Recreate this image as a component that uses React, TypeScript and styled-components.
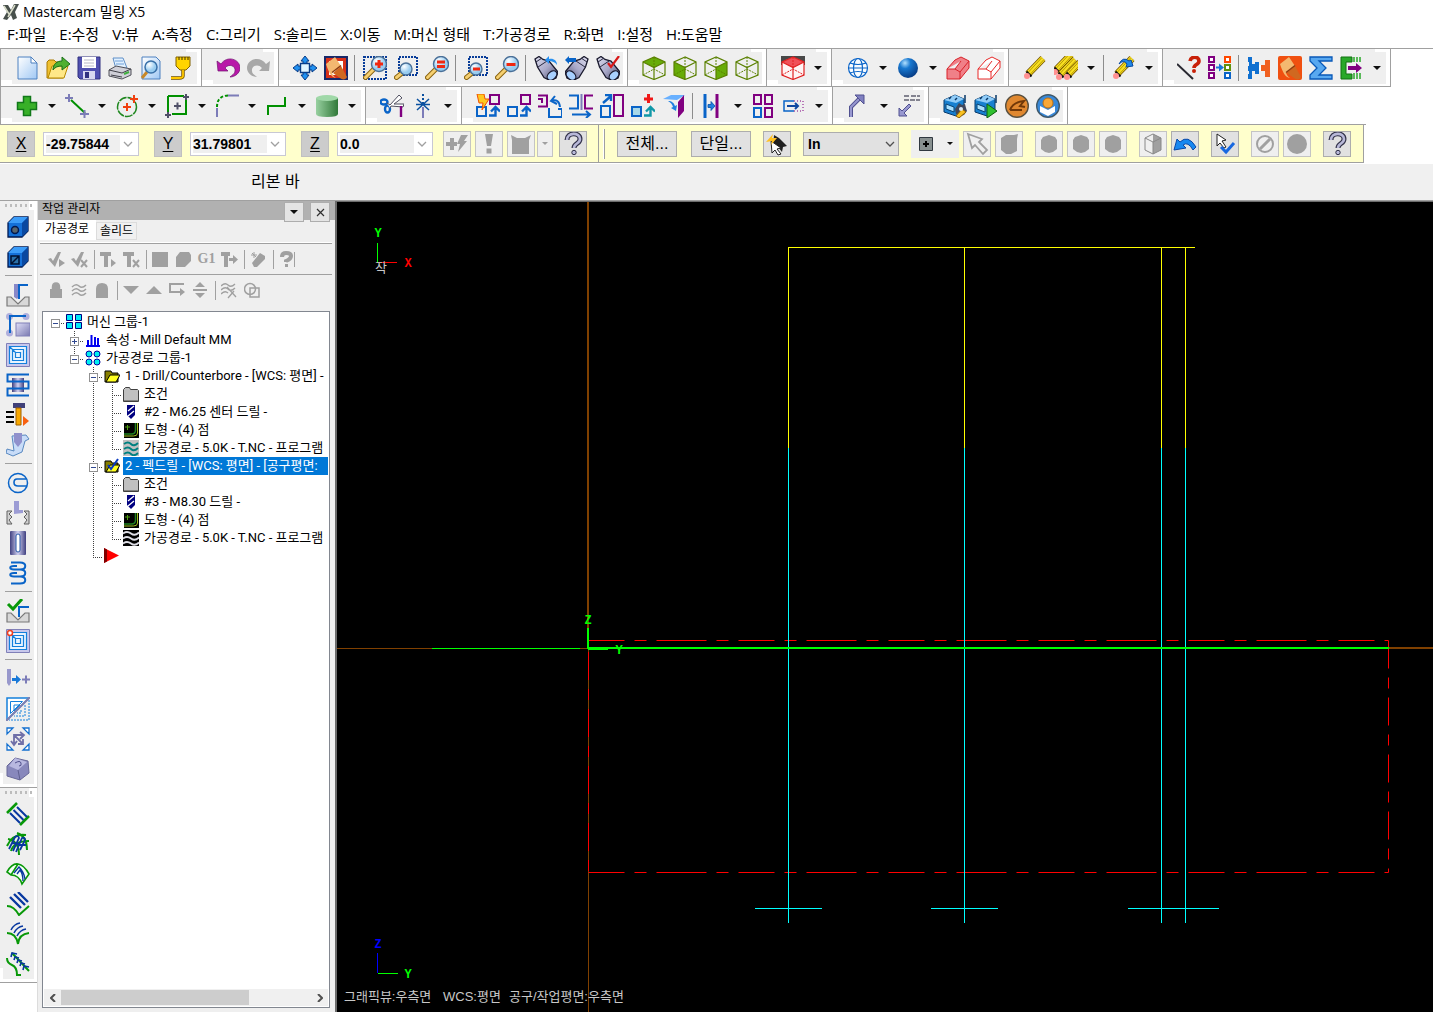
import React, { ReactNode } from 'react';
import styled, { createGlobalStyle, css } from 'styled-components';

const ui = `"Open Sans", "Noto Sans CJK KR", sans-serif`;
const treeFont = `Roboto, "Noto Sans CJK KR", sans-serif`;
const bitmap = `"Liberation Sans", "Noto Sans CJK KR", sans-serif`;

const GlobalStyle = createGlobalStyle`
  * { box-sizing: border-box; }
  body { margin: 0; background: #fff; color: #000; font: 13px/18px ${ui}; }
  button, input, select { font: inherit; color: inherit; margin: 0; }
  button { border: 0; padding: 0; background: none; }
  svg { display: block; flex: none; }
`;

/* ---------- shared drawing parts ---------- */

const OLIVE = '#5a8000';
const BLUE = '#0a64c8';
const PURPLE = '#800080';
const LAV = '#7c7cb8';
const GREY = '#a0a0a0';

const Stroke = ({ d, c = BLUE, w = 2, dash, fill = 'none' }: { d: string; c?: string; w?: number; dash?: string; fill?: string }) => (
  <path d={d} stroke={c} strokeWidth={w} strokeDasharray={dash} fill={fill} />
);

const Lens = ({ x = 15, y = 9, r = 8, sign }: { x?: number; y?: number; r?: number; sign?: string }) => (
  <>
    <path d={`M${x - r * 0.7} ${y + r * 0.7}L2.5 21.5`} stroke="#8a6410" strokeWidth="5" strokeLinecap="round" />
    <path d={`M${x - r * 0.7} ${y + r * 0.7}L2.5 21.5`} stroke="#f5cf70" strokeWidth="3" strokeLinecap="round" />
    <circle cx={x} cy={y} r={r} fill="url(#glass)" stroke="#4a7098" strokeWidth="1.4" />
    {sign && <path d={sign} stroke="#f02810" strokeWidth="3" fill="none" />}
  </>
);

const Binoculars = ({ flip }: { flip?: boolean }) => (
  <g transform={flip ? 'matrix(-1 0 0 1 24 0)' : undefined}>
    <path d="M1 3l4-2.500 4 3 6 1.500 9 11-2 6-6 2.500-6-3L3.500 11z" fill="url(#steel)" stroke="#18182c" strokeWidth="1.3" />
    <path d="M2 6l6-4M4 11l9-6" stroke="#282840" />
    <ellipse cx="18" cy="19.500" rx="5.500" ry="3.800" transform="rotate(-42 18 19.500)" fill="#a8d0ff" stroke="#18182c" strokeWidth="1.2" />
  </g>
);

const Cube = ({ face, c = OLIVE, fill = '#68ac08' }: { face?: string; c?: string; fill?: string }) => (
  <>
    {face && <path d={face} fill={fill} />}
    <path d="M12 1L1 6v13l11 4.500 11-4.500V6zM1 6l11 5.500L23 6M12 11.500v12" fill="none" stroke={c} strokeWidth="1.2" />
    <path d="M12 1v12M1 19l11-6 11 6" fill="none" stroke={c} strokeWidth="1" strokeDasharray="2 1" />
  </>
);

const Pencil = ({ x = 0, y = 0 }: { x?: number; y?: number }) => (
  <g transform={`translate(${x} ${y})`}>
    <path d="M5 18L20 2.500" stroke="#705000" strokeWidth="7" />
    <path d="M5 18L20 2.500" stroke="#f8e020" strokeWidth="5.400" />
    <path d="M5 16.500L18.500 2M7 18.500L21 3.500" stroke="#a88800" strokeWidth=".8" />
    <path d="M3.500 15.500l5 5" stroke="#101010" strokeWidth="2" />
    <circle cx="4" cy="20" r="3" fill="#ff9090" />
  </g>
);

const Brush = () => (
  <>
    <path d="M2 8l9-7 6 9-9 7c1 2 2 4 4 5-5-1-7-5-10-14z" fill="#f4b870" />
    <path d="M9 17l8-7 6 11c-1 3-5 3-7 1z" fill="#d06820" />
    <path d="M8 16.500l9-7" stroke="#8c3c10" strokeWidth="1.500" />
  </>
);

const Boxed = ({ x, y, s = 8, h = s, c = PURPLE, f = 'none' }: { x: number; y: number; s?: number; h?: number; c?: string; f?: string }) => (
  <rect x={x + 1} y={y + 1} width={s - 2} height={h - 2} fill={f} stroke={c} strokeWidth="2" />
);

const UpTurn = ({ c = BLUE }: { c?: string }) => <Stroke d="M13 21.500h6.500V14M15 17.500l4.500-4.500 4.500 4.500" c={c} w={2.4} />;

const QMark = () => (
  <>
    <path d="M6 8c0-8 13-8 13-1 0 5-6 4-6 9" fill="none" stroke="#303048" strokeWidth="5" />
    <path d="M6 8c0-8 13-8 13-1 0 5-6 4-6 9" fill="none" stroke="#b8b8d8" strokeWidth="2.600" />
    <circle cx="13" cy="20.500" r="2.200" fill="#b8b8d8" stroke="#303048" />
  </>
);

const Basin = () => <path d="M1 14h4l7 7 7-7h4v9H1z" fill="#d8d8d8" stroke="#787878" strokeWidth="1.200" />;
const Nested = () => (
  <>
    <path d="M0.500.500h23v23H.500z" fill="#c8c8ec" stroke="#8080b8" />
    <path d="M3 3h18v18H3z" fill="#e8f4ff" />
    <path d="M3.500 3.500h17v17h-17zM6.500 6.500h11v11h-11zM9.500 9.500h5v5h-5zM3.500 3.500l6 6" fill="none" stroke="#1480dc" strokeWidth="1.200" />
  </>
);
const Cutter = ({ hole }: { hole: ReactNode }) => (
  <>
    <path d="M2 8l6-6h14v14l-6 6H2z" fill="#1470d8" stroke="#001850" strokeWidth="1.300" />
    <path d="M2 8l6-6h14l-6 6z" fill="#3c9cf8" />
    <path d="M16 8l6-6v14l-6 6z" fill="#0a48a0" />
    {hole}
  </>
);
const Machine = () => (
  <>
    <path d="M1 6l11-5 9 4v13l-8 4-12-4z" fill="#1880d0" stroke="#083868" />
    <path d="M1 6l11-5 9 4-8 4z" fill="#90ccf8" />
    <path d="M3 10l8 3v5l-8-3z" fill="#a8e0ff" stroke="#084070" />
    <path d="M6 5l2-2M12 6l2-2M22 1v8" stroke="#083868" strokeWidth="1.500" />
  </>
);

const icons: Record<string, ReactNode> = {
  new: <><path d="M3 1h13l6 6v16H3z" fill="url(#page)" stroke="#4c80c0" /><path d="M16 1v6h6z" fill="#fff" stroke="#4c80c0" /></>,
  open: (
    <>
      <path d="M1 6l2-2h5l2 2h7v16H1z" fill="#f0c030" stroke="#a87800" />
      <path d="M2 22l4-12h16l-4 12z" fill="#ffe888" stroke="#b88a00" />
      <path d="M7 14c0-6 4-9 9-9V1l8 7-8 6v-4c-4 0-7 1-9 4z" fill="#50b030" stroke="#187018" />
    </>
  ),
  save: (
    <>
      <path d="M1 1h22v22H3l-2-2z" fill="#5050b0" stroke="#303080" />
      <path d="M5 1h14v11H5z" fill="#fff" />
      <path d="M7 4h10M7 7h10M7 10h10" stroke="#b8b8c8" />
      <path d="M6 15h12v8H6z" fill="#d8d8f0" />
      <path d="M8 16h4v6H8z" fill="#303080" />
    </>
  ),
  print: (
    <>
      <path d="M5 2h10l4 10-11 1z" fill="#e0f0ff" stroke="#6090c8" />
      <path d="M7 5h8M8 8h8" stroke="#70a0d8" />
      <path d="M1 14l7-4 15 3v6l-9 4-13-3z" fill="#d0d0d8" stroke="#505058" />
      <path d="M1 14l13 3 9-4M3 19l11 2" stroke="#404048" fill="none" />
      <path d="M16 18l5-2" stroke="#40b040" strokeWidth="2" />
    </>
  ),
  preview: (
    <>
      <path d="M3 1h14l4 4v18H3z" fill="url(#page)" stroke="#4c80c0" />
      <path d="M8 16l-5 6" stroke="#c88828" strokeWidth="3" />
      <circle cx="12" cy="11" r="6" fill="url(#glass)" stroke="#3870a8" strokeWidth="1.500" />
    </>
  ),
  cable: (
    <>
      <path d="M6 1h14v9l-4 4h-6l-4-4z" fill="#ffd400" stroke="#806000" />
      <path d="M9 1v3M12 1v3M15 1v3M18 1v3" stroke="#403000" />
      <path d="M13 14v6q0 2-4 2H1" fill="none" stroke="#705000" strokeWidth="3.400" />
      <path d="M13 14v6q0 2-4 2H1" fill="none" stroke="#ffc800" strokeWidth="1.800" />
    </>
  ),
  undo: <path d="M1 5l1 10h10l-3-3c4-5 11-2 10 3 0 3-3 4-5 6 5 0 10-4 10-9C24 3 11-1 5 8z" fill="#b818a8" stroke="#701070" strokeWidth=".700" />,
  redo: <path d="M23 5l-1 10H12l3-3c-4-5-11-2-10 3 0 3 3 4 5 6-5 0-10-4-10-9C0 3 13-1 19 8z" fill="#a8a8a8" />,
  fit: (
    <>
      <path d="M12 0l4 5h-2v4h-4V5H8zM12 24l-4-5h2v-4h4v4h2zM0 12l5-4v2h4v4H5v2zM24 12l-5 4v-2h-4v-4h4V8z" fill="#2090f0" stroke="#083c88" />
      <path d="M7.500 7.500h9v9h-9z" fill="#e0f4ff" stroke="#083c88" strokeWidth="1.400" />
    </>
  ),
  repaint: (
    <>
      <path d="M1 1h22v22H1z" fill="#d83018" stroke="#182868" strokeWidth="2" />
      <path d="M5 5h14v14H5z" fill="#fff" />
      <Brush />
    </>
  ),
  zoomWin: (<><path d="M1 1h22v22H1z" fill="none" stroke="#083c98" strokeWidth="2" strokeDasharray="2 1" /><Lens x={16} y={8} r={7.5} sign="M12 8h8M16 4v8" /></>),
  zoomTarget: (<><path d="M5 1h18v18H5z" fill="none" stroke="#083c98" strokeWidth="2" strokeDasharray="2 1" /><Lens x={12} y={13} r={6} /></>),
  zoomEq: <Lens x={16} y={8} r={7.5} sign="M12 6h8M12 10.500h8" />,
  unzoomWin: (<><path d="M5 1h18v18H5z" fill="none" stroke="#083c98" strokeWidth="2" strokeDasharray="2 1" /><Lens x={12} y={13} r={6} sign="M9 13h7" /></>),
  unzoom: <Lens x={16} y={8} r={7.5} sign="M11.500 8.500h9" />,
  viewNext: (<><Binoculars /><path d="M23 9c0-5-4-7-8-6V0l-4 4 4 4V5c3 0 6 1 8 4z" fill="#2890f0" /></>),
  viewPrev: (<><Binoculars flip /><path d="M0 4l4-4v2h7v4H4v2z" fill="#0864c8" /></>),
  viewSave: (<><Binoculars /><path d="M12 7l3 4 8-11" stroke="#d81818" strokeWidth="2.200" fill="none" /></>),
  cubeTop: <Cube face="M12 1L1 6l11 5.500L23 6z" />,
  cubeFront: <Cube face="M1 6l11 5.500v12L1 19z" />,
  cubeRight: <Cube face="M23 6l-11 5.500v12L23 19z" />,
  cubeIso: <Cube />,
  plane: (<><path d="M0 0h24v9H0z" fill="#484848" /><path d="M12 1L1 6v13l11 4.500L23 19V6z" fill="#fff4f4" /><Cube c="#e02020" fill="#f05058" face="M12 1L1 6l11 5.500L23 6z" /></>),
  wireSphere: (
    <g fill="none" stroke={BLUE} strokeWidth="1.200">
      <circle cx="12" cy="12" r="9.500" fill="#f8fcff" />
      <ellipse cx="12" cy="12" rx="4.500" ry="9.500" />
      <path d="M2.500 12h19M4 7q8 3 16 0M4 17q8-3 16 0" />
    </g>
  ),
  sphere: <circle cx="12" cy="12" r="10" fill="url(#ball)" />,
  solid: <path d="M1 13l8-9 6-3 8 4v7l-9 11H1zM1 13h8l6-8M9 13l5 3v7M14 16l9-11" fill="#f08088" stroke="#d82028" />,
  solidWire: <path d="M1 13l8-9 6-3 8 4v7l-9 11H1zM1 13h8l6-8M9 13l5 3v7M14 16l9-11" fill="#fff" stroke="#e82828" />,
  pencil: <Pencil />,
  pencils: (<><Pencil x={-3} y={-4} /><Pencil x={1} y={1} /><Pencil x={9} y={1} /></>),
  unerase: (<><Pencil /><path d="M7 8q5-5 8 0l-1 3 7-1-2-6-2 1Q11 0 7 8z" fill="#2088e8" stroke="#0848a0" /></>),
  lineInfo: (<><path d="M0 8l16 15" stroke="#282830" strokeWidth="2" /><path d="M13 5c1-5 9-5 9 0 0 4-5 3-5 7" stroke="#c82008" strokeWidth="3.600" fill="none" /><circle cx="17" cy="15" r="2" fill="#c82008" /></>),
  attrs: (
    <>
      <Boxed x={0} y={0} s={7} f="#fff" /><Boxed x={0} y={8} s={7} f="#fff" /><Boxed x={0} y={16} s={7} f="#fff" />
      <Boxed x={16} y={0} s={7} c="#ff4800" f="#fff" /><Boxed x={16} y={8} s={7} c="#60900c" f="#fff" /><Boxed x={16} y={16} s={7} c={BLUE} f="#fff" />
      <path d="M8 10.500h3v-3l5 4-5 4v-3H8z" fill="#1878d8" />
    </>
  ),
  fork: (
    <>
      <path d="M1 1h4v7h3V6h4v12H8v-3H5v8H1v-5h1v-3H1v-5h1V6H1z" fill="#1070d0" />
      <path d="M23 4v17h-5v-6h-6V9h6V4z" fill="#f06020" /><path d="M12 9h2v6h-2z" fill="#fff" />
    </>
  ),
  paint: (<><rect width="24" height="24" rx="2" fill="#f05010" /><Brush /></>),
  sigma: <path d="M1 1h22v4H10l7 7-7 7h13v4H1v-4l7-7-7-7z" fill="#58a8f0" stroke="#0858b8" strokeWidth="1.300" />,
  exit: (
    <>
      <path d="M12 1H1v22h11v-5H6V6h6z" fill="#28a828" stroke="#107010" />
      <path d="M14 1v5M17 1v5M20 1v5M14 17v6M17 17v6M20 17v6" stroke="#28a828" strokeWidth="1.500" />
      <path d="M8 10h8V7l6 5-6 5v-3H8z" fill={PURPLE} />
    </>
  ),
  plus: <path d="M8.500 2.500h7v6h6v7h-6v6h-7v-6h-6v-7h6z" fill="#38b028" stroke="#107818" strokeWidth="1.500" />,
  line: (<><Stroke c="#009000" d="M6 6l14 13" /><Stroke c={LAV} d="M0 4h8M4 0v8M15 20h9M19.500 16v8" /></>),
  circle: (<><circle cx="12" cy="13" r="9.500" fill="none" stroke="#208820" strokeWidth="1.500" strokeDasharray="8 1" /><Stroke c="#f04010" d="M8 13h8M12 9v8M15 5h8M19 1v8" /></>),
  rect: (<><Stroke c="#009000" d="M3 2h16M3 2v18M21 6v14H7" /><Stroke c="#505068" d="M9 12h7M12.500 8.500v7M18 3h6M21 0v6M0 21h6M3 18v6" /></>),
  fillet: (<><Stroke c="#009000" w={2} dash="3 2" d="M2 13Q2 2 13 1.500" /><Stroke c={LAV} d="M13 1.500h11M2 14v9" /></>),
  spline: <Stroke c="#009000" d="M3 21v-9h17V3" />,
  cylinder: (<><path d="M1 4v16q0 3 11 3t11-3V4z" fill="url(#cyl)" /><ellipse cx="12" cy="4" rx="11" ry="3" fill="#a0d8a8" /></>),
  scissors: (
    <>
      <ellipse cx="4" cy="8" rx="3.500" ry="2.500" fill="none" stroke={BLUE} strokeWidth="2.400" />
      <ellipse cx="7.500" cy="15" rx="2.500" ry="3.500" fill="none" stroke={BLUE} strokeWidth="2.400" />
      <path d="M7 9l3 2L19 1l3 3-8 6h10l-1 3-12-1-1 2" fill="#fff" stroke="#505060" />
      <path d="M21 12v11" stroke={PURPLE} strokeWidth="2.400" />
    </>
  ),
  breakIcon: (<><Stroke c="#0a50a0" d="M6 5l12 11M18 5L6 16M5 10.500h14" w={1.5} /><Stroke c="#0a50a0" dash="2 2" d="M12 0v12" /><Stroke c={LAV} d="M12 13v11" /></>),
  xDynamic: (<><Boxed x={13} y={0} s={11} /><Boxed x={0} y={12} s={11} c={BLUE} /><UpTurn /><path d="M1 0h7l1 5h4L6 16l1-7H3z" fill="#ffc820" stroke="#f05000" /></>),
  xTranslate: (<><Boxed x={13} y={0} s={11} /><Boxed x={0} y={12} s={11} c={BLUE} /><UpTurn /></>),
  xRotate: (<><Stroke c={PURPLE} d="M0 1.500h9v11H0M4 5v4M0 5h5" /><Stroke d="M12 15h-1v8h13v-8h-4M13 7q8-3 9 6M17 2l-4 5 6 3" /></>),
  xMirror: (<><Stroke d="M0 1.500h9v13H0M3 20.500h18M17 17l4 3.500-4 3.500" /><Stroke c={PURPLE} d="M24 1.500h-8v13h8" /><Stroke c={LAV} d="M12.500 0v16" /></>),
  xScale: (<><Boxed x={0} y={11} s={11} h={13} c={BLUE} /><Boxed x={13} y={0} s={11} h={23} /><Stroke d="M3 9l8-7M5 1h6v6" w={2.4} /></>),
  xOffset: (<><Boxed x={0} y={12} s={11} c={BLUE} f="#a8d8e8" /><UpTurn c="#1098a8" /><Stroke c="#f01818" d="M13 5h9M17.500 0v9" w={3} /></>),
  xProject: (<><path d="M1 5l8-4h14l-8 5z" fill="#68b0ff" /><path d="M16 8l6-7v16l-6 7z" fill={PURPLE} /><path d="M6 7c4 0 6 2 7 5l2-1-1 6-5-3 2-1q-1-4-5-6z" fill="#2080e0" /></>),
  xMove: (<><Stroke d="M4 0v24" w={3} /><Stroke c={PURPLE} d="M16 0v24" w={3} /><path d="M7 10.500h3v-3l4 4.500-4 4.500v-3H7z" fill="#2080e0" stroke="#0850a8" strokeWidth=".800" /></>),
  array: (<><Boxed x={2} y={0} s={9} h={11} /><Boxed x={13} y={0} s={9} h={11} /><Boxed x={2} y={13} s={9} h={11} c={BLUE} /><Boxed x={13} y={13} s={9} h={11} /></>),
  stretch: (<><path d="M12 7h9v10h-9" fill="none" stroke={PURPLE} strokeDasharray="1 2" /><Stroke w={1.5} d="M12 7H2v10h10" /><Stroke d="M5 12h11M13 9l3 3-3 3" w={2} c="#1048a0" /></>),
  leader: (<><path d="M4 23V13l9-9" fill="none" stroke="#505090" strokeWidth="4" /><path d="M4 23V13l9-9" fill="none" stroke="#9898d0" strokeWidth="2" /><path d="M8 1h9v9z" fill="#8080c0" stroke="#505090" /></>),
  note: (<><path d="M7 2h5M14 2h9M7 6h16" stroke="#606070" strokeDasharray="5 1" strokeWidth="1.500" /><path d="M2 22v-8l3 3 7-7 2 2-7 7 3 3z" fill="#9898d0" stroke="#505090" /></>),
  machineSet: (<><Machine /><path d="M16 9l3 2 3-1 1 4 1 3-3 4-4 1-4-2-1-5 2-3z" fill="#40485c" /><path d="M13 22l6-7 4 3-7 6z" fill="#f8c020" stroke="#906000" /><circle cx="18" cy="15" r="2" fill="#e0e8f0" /></>),
  machineRun: (<><Machine /><path d="M13 10l10 7-10 7z" fill="#30c030" stroke="#106010" /></>),
  chook: (<><circle cx="12" cy="12" r="11.300" fill="#e08830" stroke="#585040" strokeWidth="1.400" /><path d="M5 16q3-8 14-9l-4 5 5 1M5 16h12" stroke="#703808" strokeWidth="2" fill="none" /></>),
  person: (<><circle cx="12" cy="12" r="11.300" fill="#3888d8" stroke="#405868" strokeWidth="1.400" /><path d="M4 12l8 4 7-4v6l-7 4-8-4z" fill="#fff" /><circle cx="12" cy="9" r="5" fill="#f8a838" stroke="#c07010" /></>),

  /* left bars */
  boxRound: <Cutter hole={<circle cx="9" cy="15" r="3.500" fill="#58646c" stroke="#001850" strokeWidth="1.500" />} />,
  boxSquare: <Cutter hole={<path d="M5 11h8v8H5zM5 19l8-8" fill="#2a70a8" stroke="#001030" strokeWidth="1.500" />} />,
  contour: (<><Basin /><path d="M8 1h5v13l-2 2-3-2z" fill="#8888c8" /><Stroke d="M22 2h-9v14" /></>),
  pocket: (<><rect x="10" y="10" width="14" height="13" fill="url(#lav)" stroke="#8080b8" /><circle cx="3.500" cy="3.500" r="3.500" fill="#b0b0dc" /><circle cx="20" cy="3.500" r="3.500" fill="#b0b0dc" /><circle cx="3.500" cy="20" r="3.500" fill="#b0b0dc" /><Stroke d="M20 3H4v17" /></>),
  nested: <Nested />,
  slot: (<><path d="M6 5h12v14H6z" fill="url(#barGrad)" /><Stroke d="M23 1.500H1.500v7h21v7H1.500v7H23" /></>),
  tool: (<><path d="M7 0h12v5H7z" fill="#404078" /><path d="M10 5h5v17h-5z" fill="#f8a800" stroke="#a06000" /><path d="M0 9h8M0 14h8M0 19h8" stroke="#000" strokeWidth="2" /><path d="M17 13l6 5-6 5z" fill="#f86010" /></>),
  scroll: (<><path d="M6 3l14-1 3 4-4 2-3 11-9 4-7-3 1-4 7 2z" fill="#c8dcf8" stroke="#5888c0" /><path d="M8 0h8v9l-4 5-4-5z" fill="#9090cc" /></>),
  circ: (<><circle cx="12" cy="12" r="9.500" fill="none" stroke={BLUE} strokeWidth="1.500" /><Stroke d="M11 8h9M12 15h9M11 8q-3 0-3 3.500t4 3.500" w={1.6} /></>),
  thread: (<><path d="M8 0h5v9h4v3l-9 1z" fill="#9c9cd4" /><path d="M1 10h5l-3 3 3 3-3 3 3 4H1zM23 10h-5l3 3-3 3 3 3-3 4h5z" fill="#d0d0d0" stroke="#606060" /></>),
  bar: (<><rect x="4" width="16" height="24" rx="1" fill="url(#barGrad)" /><rect x="10" y="3" width="4" height="18" rx="2" fill="#fff" stroke="#2858a8" /></>),
  helix: <Stroke w={2} d="M5 1.500h9c7 0 7 7 0 7H8c-5 0-5-3.500 0-3.500h3M14 8.500c7 0 7 7 0 7H8c-5 0-5-3.500 0-3.500h3M14 15.500c7 0 7 7 0 7H5" />,
  check: (<><Basin /><Stroke d="M23 8H13v10" /><Stroke c="#089808" w={3} d="M2 5l5 5L16 0" /></>),
  nestedDot: (<><Nested /><circle cx="4" cy="4" r="2.500" fill="#fff" stroke="#f04020" strokeWidth="1.500" /></>),
  step: (<><path d="M1 2h4v14l-2 3-2-3z" fill="#9898cc" /><path d="M6 11h4V8l5 4.500-5 4.500v-3H6z" fill="#1878d8" /><Stroke c={LAV} d="M16 12.500h8M20 8.500v8" /></>),
  trimPath: (<><path d="M1 1h22L1 23z" fill="#fff" stroke="#1480dc" strokeWidth="1.500" /><path d="M4.500 4.500h12l-12 12zM8 8h6l-6 6z" fill="none" stroke="#1480dc" /><path d="M23 3v20H3M19 8v11H8M15 13v3h-4" fill="none" stroke="#1480dc" strokeDasharray="2 1" /><Stroke c="#8080b0" d="M0 24L24 0" /></>),
  transform: (<><path d="M1 1h6L1 7zM23 1h-6l6 6zM1 23h6l-6-6zM23 23h-6l6-6z" fill="#fff" stroke="#1470d0" strokeWidth="1.300" /><path d="M8 17V8h9M5 14l3 4 3-4M14 5l4 3-4 4M8 8l9 9M17 12v5h-5" fill="none" stroke="#7070a8" strokeWidth="1.800" /></>),
  key: (<><path d="M1 9L9 1l13 3 1 12-9 7-13-4z" fill="#8888bc" stroke="#686898" /><path d="M9 1L3 9l9 4 9-8z" fill="#b8b8e0" /><path d="M12 13l2 10" stroke="#606090" /><path d="M9 6q5-3 6 0t-2 3" stroke="#50508c" fill="none" /></>),
  surf1: (<><Stroke c="#089808" w={2.6} d="M1 11L11 1M14 23l9-9" /><Stroke c="#0838a0" d="M4 11l10 10M7.500 8l10 10M11 5l10 10" w={2} /></>),
  surf2: (<><path d="M1 14Q7 1 20 3M5 19Q8 9 23 9M2 7q11 2 11 16M11 1q10 3 10 17" stroke="#089808" strokeWidth="2" fill="none" /><path d="M3 17L9 5q3-2 4 1l-6 13M10 20l6-14q3-1 3 2l-5 10M6 11l14 2" stroke="#0838a0" strokeWidth="1.800" fill="none" /></>),
  surf3: (<><path d="M1 10Q6 1 12 2q6 1 11 10l-7 10Q13 13 5 13zM5 13l7-11" stroke="#089808" strokeWidth="1.600" fill="#f4fff4" /><path d="M8 11l5-6q5 5 6 12M11 12l3-4q3 4 3 11" stroke="#0838a0" strokeWidth="1.400" fill="none" /></>),
  surf4: (<><Stroke c="#089808" w={2} d="M1 14q7 0 12 9l10-9" /><Stroke c="#0838a0" w={2.4} d="M4 5l11 11M8 2l11 11M12 0l10 10" /></>),
  surf5: (<><Stroke c="#089808" w={2} d="M1 11q9 0 11 11 1-10 11-11" /><Stroke c="#0838a0" w={1.5} d="M5 8q3-6 9-7M8 11q3-6 9-7M11 14q3-6 9-7" /></>),
  surf6: (<><Stroke c="#089808" w={2} d="M6 1l17 18M1 6q0 5 5 7t5 10h4" /><Stroke c="#0838a0" w={1.6} d="M5 5l1-4 5 1M8 8l1-3 4 1M11 11l1-3 4 1M14 14l1-3 4 1M17 18l1-4 5 1" /></>),

  /* selection bar */
  q: <QMark />,
  flash: <path d="M1 10h4V6h4v4h3v4H9v4H5v-4H1zM16 3h7l-4 6h3l-9 11 2-8h-3z" fill={GREY} />,
  bang: <path d="M8 2h8l-2 12h-4zM9.500 16.500h5v5h-5z" fill={GREY} />,
  region: <path d="M2 3l6 3h8l6-3-2 5v14H3V8z" fill={GREY} />,
  pick: (<><path d="M9 3l5 3 8 8-4 1-1 5-4-5-5 1z" fill="#202020" /><path d="M6 9l10 7-4 1 4 5-3 1-3-5-3 3z" fill="#fff" stroke="#202020" /><path d="M1 10l7-8-1 4h5l-6 7 1-4z" fill="#ffc020" /></>),
  arrow: <path d="M3 2l14 5-3 3 8 8-4 4-8-9-3 3z" fill="#f0f0f0" stroke={GREY} strokeWidth="1.800" />,
  blob: <path d="M4 6l5-3h8l4-1-1 5v12l-6 3H9l-5-4z" fill={GREY} />,
  hex: <path d="M12 3l6 2 2 3v9l-4 3-4 1-4-1-4-3V8l2-3z" fill={GREY} />,
  cubeGrey: (<><path d="M12 2l8 4v12l-8 4z" fill={GREY} /><path d="M12 2L4 6v12l8 4 8-4V6zM4 6l8 4 8-4M12 10v12" stroke="#888" fill="none" /></>),
  back: <path d="M1 18L4 7l3 3Q15 2 23 15l-3 3Q15 9 10 13l3 3z" fill="#1888f0" stroke="#0848a8" />,
  verify: (<><path d="M4 2l9 6-4 1 4 6-2 1-4-5-3 3z" fill="#fff" stroke="#202020" /><path d="M8 15l5 5 8-9" stroke="#1868e0" strokeWidth="3" fill="none" /></>),
  forbid: (<><circle cx="12" cy="12" r="8" fill="none" stroke={GREY} strokeWidth="2" /><path d="M7 17L17 7" stroke={GREY} strokeWidth="3" /></>),
  disc: <circle cx="12" cy="12" r="10" fill={GREY} />,
  pt: (<><path d="M5.500 5.500h13v13h-13z" fill="#889090" stroke="#303840" /><path d="M9 12h6M12 9v6" stroke="#000" strokeWidth="2" /></>),
};

/* ---------- 16px glyphs used by the operations manager ---------- */

const g = (d: string) => <path d={d} fill={GREY} />;
const check = 'M0 8l3-1 2 3 5-9 3 0L7 16z';
const opIcons: Record<string, ReactNode> = {
  selAll: g(`${check}M11 8l6 4-6 4z`),
  selNone: (<>{g(check)}<Stroke c={GREY} d="M10 9l6 7M16 9l-6 7" /></>),
  regen: g('M0 1h11v4H8v11H4V5H0zM11 8l5 4-5 4z'),
  regenBad: (<>{g('M0 1h11v4H8v11H4V5H0z')}<Stroke c={GREY} d="M10 9l6 7M16 9l-6 7" /></>),
  square: g('M0 1h16v15H0z'),
  poly: g('M5 1h9l2 3v6l-6 6H1V6z'),
  post: g('M0 1h9v4H7v11H3V5H0zM8 7h4V4l5 4.500-5 4.500v-3H8z'),
  tag: (<>{g('M10 2l5 3v3L7 16H4l-2-4z')}<Stroke c={GREY} w={1} d="M1 4h6M4 1v6M2 2l4 4" /></>),
  help: (<><Stroke c={GREY} w={4} d="M3 6q0-4 4-4 5 0 5 3 0 3-5 5v1" />{g('M6 13h3v3H6z')}<Stroke c={GREY} w={1} d="M15.500 1v15" /></>),
  lock: (<>{g('M2 7h12v9H2z')}<path d="M4.500 8V5q0-4 3.500-4t3.500 4v3" fill={GREY} stroke={GREY} strokeWidth="1.500" /></>),
  waves: <Stroke c={GREY} w={1.5} d="M1 5q4-4 7-1t7-1M1 9q4-4 7-1t7-1M1 13q4-4 7-1t7-1" />,
  ghost: <path d="M2 7q0-6 6-6t6 6v9H2z" fill={GREY} />,
  down: g('M0 4h16l-8 8z'),
  up: g('M0 12h16L8 4z'),
  insert: (<><Stroke c={GREY} d="M15 2H1v8h12" w={2} />{g('M11 6l5 4-5 4z')}</>),
  scrollTo: g('M8 0l5 5H3zM1 7h14v2H1zM8 16l5-5H3z'),
  wavesOff: (<><Stroke c={GREY} w={1.3} d="M0 4q4-4 7-1t7-1M0 8q4-4 7-1t7-1M0 12q4-4 7-1M6 5l9 10M13 9l-6 7" /></>),
  shapes: (<><circle cx="6" cy="7" r="5.500" fill="none" stroke={GREY} strokeWidth="1.500" /><Stroke c={GREY} w={1.5} d="M6 6h9v9H6z" /></>),

  machineGroup: <path d="M.500.500h6v6h-6zM9.500.500h6v6h-6zM.500 8.500h6v6h-6zM9.500 8.500h6v6h-6z" fill="#00e8f8" stroke="#000080" />,
  props: <path d="M1 14h14M3 14V8M6.500 14V3M10 14V5M13 14V6" stroke="#0000f0" strokeWidth="2" fill="none" />,
  pathGroup: (<g fill="#00f0f0" stroke="#0000a0"><circle cx="4" cy="4" r="3" /><circle cx="12" cy="4" r="3" /><circle cx="4" cy="12" r="3" /><circle cx="12" cy="12" r="3" /></g>),
  folder: (<><path d="M1 3h6l1 2h6v9H1z" fill="#888000" stroke="#000" /><path d="M2 14l4-7h10l-4 7z" fill="#ffff20" stroke="#000" /></>),
  folderOn: (<><path d="M1 3h6l1 2h6v9H1z" fill="#888000" stroke="#000" /><path d="M2 14l4-7h10l-4 7z" fill="#ffff20" stroke="#000" /><path d="M4 7l3 4 7-10" stroke="#0838c0" strokeWidth="2" fill="none" /></>),
  cond: (<><path d="M.500 3.500l2-2h4l1 2h7l1 1v11H.500z" fill="#c0c0c0" stroke="#404040" /><path d="M1 14.500h14" stroke="#808080" /></>),
  drill: (<><path d="M4 1h8v10l-4 4-4-4z" fill="#000080" /><path d="M5 7l6-5M5 12l6-5" stroke="#fff" strokeWidth="1.300" /></>),
  geo: (<><path d="M1 1h15v15H1z" fill="#000" /><path d="M12.500 1v7q0 4-4 4H1" stroke="#208020" strokeWidth="1.500" fill="none" /><path d="M14.500 1v10q0 3-4 3H1" stroke="#a0c020" fill="none" /><path d="M2 5h5M4.500 3v5" stroke="#50a010" /></>),
  nc: (<><path d="M0 0h16v16H0z" fill="#c0c0c0" /><Stroke c="#008080" w={1.8} d="M1 4q4-3 7 0t7-1M1 9q4-3 7 0t7-1M1 14q4-3 7 0t7-1" /></>),
  ncOff: (<><path d="M0 0h16v16H0z" fill="#000" /><Stroke c="#e0e0e8" w={1.8} d="M0 3.500q4-3 8 0t8-1M0 8.500q4-3 8 0t8-1M0 13.500q4-3 8 0t8-1" /></>),
  insertArrow: (<><path d="M0 0l15 7.500L0 15z" fill="#f00" /><path d="M0 0l3 1.500v12L0 15z" fill="#800000" /></>),
};

/* ---------- styled parts ---------- */

const Shell = styled.div`display: flex; flex-direction: column; min-height: 100vh;`;
const Defs = styled.svg`position: absolute; width: 0; height: 0;`;

const TitleBar = styled.header`
  display: flex; align-items: center; gap: 4px; height: 24px; padding: 0 3px;
  h1 { margin: 0; font: 14px/18px ${ui}; }
`;
const MenuBar = styled.nav`
  display: flex; gap: 13px; height: 24px; padding: 0 7px 4px; align-items: center; white-space: nowrap;
  font-size: 15px;
  a { color: inherit; text-decoration: none; }
`;
const ToolRows = styled.div`border-top: 1px solid #a0a0a0;`;
const ToolRow = styled.div<{ $min?: number }>`
  display: flex; width: fit-content; height: 38px; min-width: ${p => p.$min ?? 0}px;
  border-left: 1px solid #a0a0a0; border-bottom: 1px solid #a0a0a0;
`;
const Group = styled.div`
  display: flex; align-items: center; padding: 0 4px 0 10px; border-right: 1px solid #a0a0a0;
  background:
    linear-gradient(#fff, #fff) right top / 15px 3px no-repeat,
    linear-gradient(#fff, #fff) left bottom / 11px 6px no-repeat,
    linear-gradient(#fff, #fff) right top / 4px 100% no-repeat,
    linear-gradient(#fff, #fff) left bottom / 100% 2px no-repeat,
    #efefef;
`;
const ToolButton = styled.button`display: grid; place-items: center; width: 31px; height: 30px;`;
const DropButton = styled.button`display: grid; place-items: center; width: 19px; height: 30px;`;
const Divider = styled.span`width: 1px; height: 26px; margin: 0 4px 0 3px; background: #8c8c8c;`;

const SelectBar = styled.div`
  display: flex; align-items: center; width: fit-content; height: 38px; padding: 0 12px 0 7px;
  background: #ffffcc; border-right: 1px solid #a0a0a0; border-bottom: 1px solid #a0a0a0;
`;
const Cluster = styled.div<{ $lead?: number; $gap?: number }>`
  display: flex; align-items: center; gap: ${p => p.$gap ?? 4}px; margin-left: ${p => p.$lead ?? 12}px;
`;
const SquareButton = styled.button<{ $tone?: 'live'; $w?: number }>`
  display: grid; place-items: center; width: ${p => p.$w ?? 28}px; height: 26px; font: 16px/20px ${bitmap};
  border: 1px solid ${p => (p.$tone === 'live' ? '#adadad' : '#c4c4c4')};
  background: ${p => (p.$tone === 'live' ? '#e1e1e1' : '#efefef')};
`;
const AxisLabel = styled.label`
  display: grid; place-items: center; width: 28px; height: 26px; border: 1px solid #c0c0c0; background: #ccc;
  font: 16px/22px ${bitmap}; text-decoration: underline; text-underline-offset: 2px;
`;
const Combo = styled.div`
  display: flex; width: 96px; height: 24px; padding: 2px; background: #fff; border: 1px solid #c8c8d4;
  input { width: 74px; border: 0; padding: 0; background: #efefef; font: bold 14px/18px ${bitmap}; }
  button { flex: 1; display: grid; place-items: center; }
`;
const Picker = styled.span`
  display: grid; width: 96px; align-items: center; margin-left: 12px;
  select, svg { grid-area: 1 / 1; }
  svg { justify-self: end; margin-right: 4px; pointer-events: none; }
  select { appearance: none; width: 100%; height: 24px; padding: 0 4px; border: 1px solid #adadad; border-radius: 0;
    background: #e1e1e1; font: bold 14px/18px ${bitmap}; }
`;
const Rule = styled.span`width: 1px; align-self: stretch; margin-left: 11px; background: #a0a0a0;`;
const Grip = styled.span`width: 2px; height: 30px; margin-left: 4px; border-right: 1px solid #a0a0a0; background: #fff;`;
const PointMode = styled.div`
  display: flex; align-items: center; width: 48px; height: 28px; margin-left: 12px; background: #efefef;
`;
const RibbonBar = styled.div`
  height: 38px; padding: 8px 251px; background: #f0f0f0; border-top: 1px solid #fff; border-bottom: 1px solid #a0a0a0;
  font: 16px/20px ${bitmap};
`;

const Work = styled.div`display: flex; flex: 1;`;
const SideBars = styled.aside`width: 38px; border-right: 1px solid #dcdcdc;`;
const SideBar = styled.div`
  display: flex; flex-direction: column; align-items: center; padding: 3px 1px 3px 0; border-bottom: 1px solid #a0a0a0;
  background:
    linear-gradient(#fff, #fff) right top / 8px 9px no-repeat,
    linear-gradient(#fff, #fff) left bottom / 3px 14px no-repeat,
    linear-gradient(#fff, #fff) right top / 3px 100% no-repeat,
    linear-gradient(#fff, #fff) left bottom / 100% 3px no-repeat,
    #efefef;
  &::before { content: ''; width: 27px; height: 3px; margin-bottom: 5px;
    background: repeating-linear-gradient(90deg, #bcbcbc 0 2px, transparent 2px 5px); }
`;
const SideButton = styled.button`display: grid; place-items: center; width: 36px; height: 30px;`;
const SideDivider = styled.span`width: 27px; height: 1px; margin: 3px 0 4px; background: #a0a0a0;`;

const Panel = styled.section`
  display: flex; flex-direction: column; width: 299px; padding-bottom: 4px; background: #efefef;
  border-right: 2px solid #6c6c6c;
`;
const PanelHead = styled.div`
  display: flex; gap: 6px; height: 19px; padding: 1px 5px 0 4px; background: #b1b1b1;
  h2 { flex: 1; margin: 0; font: 12px/14px ${ui}; }
`;
const HeadButton = styled.button`
  display: grid; place-items: center; width: 20px; height: 20px; background: #e4e4e4; border: 1px solid #adadad;
`;
const Tabs = styled.div`display: flex; align-items: flex-end; height: 20px;`;
const Tab = styled.button<{ $on?: boolean }>`
  height: ${p => (p.$on ? 20 : 18)}px; width: ${p => (p.$on ? 58 : 41)}px; white-space: nowrap;
  padding: ${p => (p.$on ? '0 0 3px' : 0)}; font: 12px/14px ${ui};
  background: ${p => (p.$on ? '#fff' : '#f0f0f0')}; border: ${p => (p.$on ? 0 : '1px solid #dcdcdc')};
`;
const OpBars = styled.div`margin: 2px 3px 0 2px; border-top: 1px solid #fff;`;
const OpBar = styled.div`
  display: flex; align-items: center; height: 31px; padding-left: 5px; border-top: 1px solid #a0a0a0;
`;
const OpButton = styled.button`display: grid; place-items: center; width: 23px; height: 22px; color: ${GREY}; font: bold 14px/16px "Liberation Serif", serif;`;
const OpDivider = styled.span`width: 1px; height: 19px; margin: 0 2px 0 3px; background: ${GREY};`;

const TreeBox = styled.div`
  display: flex; flex-direction: column; justify-content: space-between; flex: 1; margin: 6px 5px 0 4px; background: #fff; border: 1px solid #828790;
`;
const Tree = styled.ul`list-style: none; margin: 0; padding: 1px 1px 0 3px; overflow: hidden;`;
const Item = styled.li`display: flex; height: 18px; font: 13px/18px ${treeFont};`;
const dots = (dir: string) => `repeating-linear-gradient(${dir}, #404040 0 1px, transparent 1px 2px)`;
const Guide = styled.span<{ $kind: string }>`
  display: grid; place-items: center; flex: none; width: 19px; height: 18px;
  ${p => p.$kind === 'v' && css`background: ${dots('180deg')} 9px 0 / 1px 100% no-repeat;`}
  ${p => p.$kind === 't' && css`background: ${dots('180deg')} 9px 0 / 1px 100% no-repeat, ${dots('90deg')} 9px 10px / 10px 1px no-repeat;`}
  ${p => p.$kind === 'e' && css`background: ${dots('180deg')} 9px 0 / 1px 10px no-repeat, ${dots('90deg')} 9px 10px / 10px 1px no-repeat;`}
  ${p => p.$kind === 'r' && css`background: ${dots('90deg')} 9px 10px / 10px 1px no-repeat;`}
`;
const Expander = styled.button`
  display: grid; place-items: center; width: 9px; height: 9px; margin-top: 2px; background: #fff; border: 1px solid #919191;
`;
const ItemIcon = styled.svg`width: 16px; height: 16px; margin: 1px 3px 0 1px;`;
const ItemLabel = styled.span<{ $on?: boolean }>`
  flex: ${p => (p.$on ? 1 : 'none')}; height: 18px; padding-left: 2px; white-space: nowrap;
  ${p => p.$on && css`background: #0078d7; color: #fff;`}
`;
const ScrollBar = styled.div`display: flex; align-items: center; height: 17px; background: #f0f0f0; margin: 0 1px 1px;`;
const ScrollArrow = styled.button`display: grid; place-items: center; width: 17px; height: 17px;`;
const ScrollTrack = styled.div`flex: 1; height: 15px;`;
const ScrollThumb = styled.div`width: 75%; height: 100%; background: #cdcdcd;`;

const Viewport = styled.main`flex: 1; display: flex; min-width: 0; background: #000; border-top: 1px solid #6c6c6c;`;
const Drawing = styled.svg`
  width: 100%; height: 100%; min-height: 810px;
  text { font: 13px ${bitmap}; text-anchor: middle; }
  .axis { font: bold 12px "Liberation Mono", monospace; }
  .status { text-anchor: start; fill: #c8c8c8; }
`;

/* ---------- components ---------- */

const Icon = ({ name, size = 24 }: { name: string; size?: number }) => (
  <svg width={size} height={size} viewBox="0 0 24 24" fill="none" aria-hidden="true">{icons[name]}</svg>
);
const Caret = ({ w = 8 }: { w?: number }) => (
  <svg width={w} height={w / 2} viewBox="0 0 8 4" aria-hidden="true"><path d="M0 0h8L4 4z" fill="#101010" /></svg>
);
const Chevron = ({ c = '#a0a0a0' }: { c?: string }) => (
  <svg width="10" height="6" viewBox="0 0 10 6" fill="none" aria-hidden="true"><path d="M1 1l4 4 4-4" stroke={c} strokeWidth="1.300" /></svg>
);

/* "|" is a divider and a trailing "*" gives the button a drop-down */
const ToolGroup = ({ items }: { items: string }) => (
  <Group>
    {items.split(' ').map((it, i) => {
      if (it === '|') return <Divider key={i} />;
      const name = it.replace('*', '');
      return (
        <React.Fragment key={i}>
          <ToolButton type="button" aria-label={name}><Icon name={name} /></ToolButton>
          {it.endsWith('*') && <DropButton type="button" aria-label={`${name} menu`}><Caret /></DropButton>}
        </React.Fragment>
      );
    })}
  </Group>
);

const SideGroup = ({ items }: { items: string }) => (
  <SideBar>
    {items.split(' ').map((it, i) => it === '|'
      ? <SideDivider key={i} />
      : <SideButton key={i} type="button" aria-label={it}><Icon name={it} /></SideButton>)}
  </SideBar>
);

const OpGroup = ({ items }: { items: string }) => (
  <OpBar>
    {items.split(' ').map((it, i) => it === '|'
      ? <OpDivider key={i} />
      : (
        <OpButton key={i} type="button" aria-label={it}>
          {it === 'G1' ? 'G1' : <svg width="17" height="17" viewBox="0 0 17 17" fill="none">{opIcons[it]}</svg>}
        </OpButton>
      ))}
  </OpBar>
);

const Coord = ({ axis, value }: { axis: string; value: string }) => (
  <>
    <AxisLabel htmlFor={`axis-${axis}`}>{axis}</AxisLabel>
    <Combo>
      <input id={`axis-${axis}`} defaultValue={value} />
      <button type="button" aria-label={`${axis} list`}><Chevron /></button>
    </Combo>
  </>
);

type Node = { guides: string; icon: string; label?: string; sign?: '+' | '-'; on?: boolean };
const tree: Node[] = [
  { guides: 'r', icon: 'machineGroup', label: '머신 그룹-1', sign: '-' },
  { guides: ' t', icon: 'props', label: '속성 - Mill Default MM', sign: '+' },
  { guides: ' e', icon: 'pathGroup', label: '가공경로 그룹-1', sign: '-' },
  { guides: '  t', icon: 'folder', label: '1 - Drill/Counterbore - [WCS: 평면] -', sign: '-' },
  { guides: '  vt', icon: 'cond', label: '조건' },
  { guides: '  vt', icon: 'drill', label: '#2 - M6.25 센터 드릴 -' },
  { guides: '  vt', icon: 'geo', label: '도형 - (4) 점' },
  { guides: '  ve', icon: 'nc', label: '가공경로 - 5.0K - T.NC - 프로그램' },
  { guides: '  t', icon: 'folderOn', label: '2 - 펙드릴 - [WCS: 평면] - [공구평면:', sign: '-', on: true },
  { guides: '  vt', icon: 'cond', label: '조건' },
  { guides: '  vt', icon: 'drill', label: '#3 - M8.30 드릴 -' },
  { guides: '  vt', icon: 'geo', label: '도형 - (4) 점' },
  { guides: '  ve', icon: 'ncOff', label: '가공경로 - 5.0K - T.NC - 프로그램' },
  { guides: '  e', icon: 'insertArrow' },
];

const menus = ['F:파일', 'E:수정', 'V:뷰', 'A:측정', 'C:그리기', 'S:솔리드', 'X:이동', 'M:머신 형태', 'T:가공경로', 'R:화면', 'I:설정', 'H:도움말'];

/* rapid moves are yellow above the clearance height, feed moves cyan below it */
const holes = [451, 627, 824, 848];

const PartView = () => (
  <Drawing aria-label="우측면">
    <g fill="none" strokeWidth="1">
      <path d="M251 0v446M1052 446h3000" stroke="#804000" strokeWidth="2" />
      <path d="M251.500 446v2000" stroke="#804000" />
      <path d="M0 446.500h1052" stroke="#804000" />
      <path d="M251.500 438.500h800" stroke="#f00" strokeDasharray="36 10 12 10 50 10 12 10" />
      <path d="M251.500 670.500h800" stroke="#f00" strokeDasharray="36 10 12 10 50 10 12 10" />
      <path d="M1051.500 438.500v232" stroke="#f00" strokeDasharray="28 9 11 9" />
      <path d="M251.500 450v220" stroke="#f00" strokeDasharray="28 9 11 9" />
      {holes.map(x => (
        <React.Fragment key={x}>
          <path d={`M${x + 0.5} 45v201`} stroke="#ff0" />
          <path d={`M${x + 0.5} 246v475`} stroke="#0ff" />
          <path d={`M${x - 33} 706.500h67`} stroke="#0ff" />
        </React.Fragment>
      ))}
      <path d="M451 45.500h407" stroke="#ff0" />
      <path d="M95 446.500h148" stroke="#0f0" />
      <path d="M251 446h801M251 426v21" stroke="#0f0" strokeWidth="2" />
      <path d="M251 447.500h20" stroke="#0f0" />
      <path d="M40.500 41v20M41 771.500h20" stroke="#0f0" />
      <path d="M41 60.500h19" stroke="#f00" />
      <path d="M40.500 751v20" stroke="#00f" />
    </g>
    <text className="axis" x="41" y="35" fill="#0f0">Y</text>
    <text className="axis" x="71" y="65" fill="#f00">X</text>
    <text className="axis" x="251" y="422" fill="#0f0">Z</text>
    <text className="axis" x="282" y="452" fill="#0f0">Y</text>
    <text className="axis" x="41" y="746" fill="#00f">Z</text>
    <text className="axis" x="71" y="776" fill="#0f0">Y</text>
    <text x="44" y="70" fill="#c8c8c8">작</text>
    <text className="status" x="7" y="799">그래픽뷰:우측면</text>
    <text className="status" x="106" y="799">WCS:평면</text>
    <text className="status" x="172" y="799">공구/작업평면:우측면</text>
  </Drawing>
);

export default function App() {
  return (
    <Shell>
      <GlobalStyle />
      <Defs aria-hidden="true">
        <defs>
          <linearGradient id="page" x2="1" y2="1"><stop stopColor="#fff" /><stop offset="1" stopColor="#a0c8f4" /></linearGradient>
          <radialGradient id="glass" cx=".35" cy=".3"><stop stopColor="#fff" /><stop offset="1" stopColor="#98ccf0" /></radialGradient>
          <linearGradient id="steel" x2="1" y2="1"><stop stopColor="#e0e0f0" /><stop offset=".5" stopColor="#a8a8c8" /><stop offset="1" stopColor="#404060" /></linearGradient>
          <radialGradient id="ball" cx=".35" cy=".25" r=".8"><stop stopColor="#b0e0ff" /><stop offset=".35" stopColor="#1878d0" /><stop offset="1" stopColor="#063880" /></radialGradient>
          <linearGradient id="cyl"><stop stopColor="#98d0a0" /><stop offset="1" stopColor="#307838" /></linearGradient>
          <linearGradient id="lav" x2="1" y2="1"><stop stopColor="#e0e0f8" /><stop offset="1" stopColor="#7878b0" /></linearGradient>
          <linearGradient id="barGrad"><stop stopColor="#404080" /><stop offset=".5" stopColor="#d0d0f0" /><stop offset="1" stopColor="#404080" /></linearGradient>
        </defs>
      </Defs>

      <TitleBar>
        <svg width="16" height="18" viewBox="0 0 16 18" aria-hidden="true">
          <path d="M0 2h5l3 5 3-6h5l-4 8 2 6-4 2-2-5-4 5-4-1 4-7z" fill="#48504c" />
          <path d="M1 3l5 8M12 2L5 14" stroke="#d8dcc8" strokeWidth="1.500" />
        </svg>
        <h1>Mastercam 밀링 X5</h1>
      </TitleBar>
      <MenuBar>{menus.map(m => <a key={m} href="#menu">{m}</a>)}</MenuBar>

      <ToolRows>
        <ToolRow>
          <ToolGroup items="new open save print preview cable" />
          <ToolGroup items="undo redo" />
          <ToolGroup items="fit repaint | zoomWin zoomTarget zoomEq | unzoomWin unzoom | viewNext viewPrev viewSave" />
          <ToolGroup items="cubeTop cubeFront cubeRight cubeIso" />
          <ToolGroup items="plane*" />
          <ToolGroup items="wireSphere* sphere* solid solidWire" />
          <ToolGroup items="pencil pencils* | unerase*" />
          <ToolGroup items="lineInfo attrs | fork paint sigma exit*" />
        </ToolRow>
        <ToolRow $min={1366}>
          <ToolGroup items="plus* line* circle* rect* fillet* spline* cylinder*" />
          <ToolGroup items="scissors breakIcon*" />
          <ToolGroup items="xDynamic xTranslate xRotate xMirror xScale xOffset xProject | xMove* array stretch*" />
          <ToolGroup items="leader* note" />
          <ToolGroup items="machineSet machineRun chook person" />
        </ToolRow>
      </ToolRows>

      <SelectBar>
        <Cluster $lead={0} $gap={8}><Coord axis="X" value="-29.75844" /></Cluster>
        <Cluster $lead={15} $gap={8}><Coord axis="Y" value="31.79801" /></Cluster>
        <Cluster $lead={15} $gap={8}><Coord axis="Z" value="0.0" /></Cluster>
        <Cluster $lead={10}>
          <SquareButton type="button" aria-label="fast point"><Icon name="flash" /></SquareButton>
          <SquareButton type="button" aria-label="priority"><Icon name="bang" /></SquareButton>
          <Cluster $lead={0} $gap={2}>
            <SquareButton type="button" aria-label="region"><Icon name="region" /></SquareButton>
            <SquareButton type="button" aria-label="region menu" $w={16}><svg width="6" height="3" viewBox="0 0 6 3"><path d="M0 0h6L3 3z" fill={GREY} /></svg></SquareButton>
          </Cluster>
        </Cluster>
        <Cluster $lead={6}>
          <SquareButton type="button" aria-label="help" $tone="live"><Icon name="q" /></SquareButton>
        </Cluster>
        <Rule />
        <Grip />
        <Cluster $gap={14}>
          <SquareButton type="button" $tone="live" $w={60}>전체...</SquareButton>
          <SquareButton type="button" $tone="live" $w={60}>단일...</SquareButton>
        </Cluster>
        <Cluster>
          <SquareButton type="button" aria-label="pick" $tone="live"><Icon name="pick" /></SquareButton>
        </Cluster>
        <Picker>
          <select aria-label="선택"><option>In</option></select>
          <Chevron c="#505050" />
        </Picker>
        <PointMode>
          <ToolButton type="button" aria-label="point"><Icon name="pt" /></ToolButton>
          <DropButton type="button" aria-label="point menu"><Caret w={6} /></DropButton>
        </PointMode>
        <Cluster $lead={4}>
          <SquareButton type="button" aria-label="cursor"><Icon name="arrow" /></SquareButton>
          <SquareButton type="button" aria-label="body"><Icon name="blob" /></SquareButton>
        </Cluster>
        <Cluster>
          {['edge', 'face', 'solid'].map(n => <SquareButton key={n} type="button" aria-label={n}><Icon name="hex" /></SquareButton>)}
        </Cluster>
        <Cluster>
          <SquareButton type="button" aria-label="half"><Icon name="cubeGrey" /></SquareButton>
          <SquareButton type="button" aria-label="last" $tone="live"><Icon name="back" /></SquareButton>
        </Cluster>
        <Cluster>
          <SquareButton type="button" aria-label="verify" $tone="live"><Icon name="verify" /></SquareButton>
        </Cluster>
        <Cluster>
          <SquareButton type="button" aria-label="clear"><Icon name="forbid" /></SquareButton>
          <SquareButton type="button" aria-label="end"><Icon name="disc" /></SquareButton>
        </Cluster>
        <Cluster>
          <SquareButton type="button" aria-label="help" $tone="live"><Icon name="q" /></SquareButton>
        </Cluster>
      </SelectBar>

      <RibbonBar>리본 바</RibbonBar>

      <Work>
        <SideBars>
          <SideGroup items="boxRound boxSquare | contour pocket nested slot tool scroll | circ thread bar helix | check nestedDot | step trimPath transform key" />
          <SideGroup items="surf1 surf2 surf3 surf4 surf5 surf6" />
        </SideBars>

        <Panel>
          <PanelHead>
            <h2>작업 관리자</h2>
            <HeadButton type="button" aria-label="menu"><Caret /></HeadButton>
            <HeadButton type="button" aria-label="close">
              <svg width="9" height="9" viewBox="0 0 9 9"><path d="M1 1l7 7M8 1L1 8" stroke="#303030" strokeWidth="1.200" /></svg>
            </HeadButton>
          </PanelHead>
          <Tabs>
            <Tab type="button" $on>가공경로</Tab>
            <Tab type="button">솔리드</Tab>
          </Tabs>
          <OpBars>
            <OpGroup items="selAll selNone | regen regenBad | square poly G1 post | tag | help" />
            <OpGroup items="lock waves ghost | down up insert scrollTo | wavesOff shapes" />
          </OpBars>
          <TreeBox>
            <Tree>
              {tree.map((n, i) => (
                <Item key={i}>
                  {n.guides.split('').map((k, j) => (
                    <Guide key={j} $kind={k}>
                      {n.sign && j === n.guides.length - 1 && (
                        <Expander type="button" aria-label={n.sign === '+' ? 'expand' : 'collapse'}>
                          <svg width="5" height="5" viewBox="0 0 5 5"><path d={n.sign === '+' ? 'M0 2.500h5M2.500 0v5' : 'M0 2.500h5'} stroke="#304890" /></svg>
                        </Expander>
                      )}
                    </Guide>
                  ))}
                  <ItemIcon viewBox="0 0 16 16" fill="none">{opIcons[n.icon]}</ItemIcon>
                  {n.label && <ItemLabel $on={n.on}>{n.label}</ItemLabel>}
                </Item>
              ))}
            </Tree>
            <ScrollBar>
              <ScrollArrow type="button" aria-label="scroll left"><svg width="6" height="8" viewBox="0 0 6 8" fill="none"><path d="M5 0L1 4l4 4" stroke="#505050" strokeWidth="2" /></svg></ScrollArrow>
              <ScrollTrack><ScrollThumb /></ScrollTrack>
              <ScrollArrow type="button" aria-label="scroll right"><svg width="6" height="8" viewBox="0 0 6 8" fill="none"><path d="M1 0l4 4-4 4" stroke="#505050" strokeWidth="2" /></svg></ScrollArrow>
            </ScrollBar>
          </TreeBox>
        </Panel>

        <Viewport><PartView /></Viewport>
      </Work>
    </Shell>
  );
}
